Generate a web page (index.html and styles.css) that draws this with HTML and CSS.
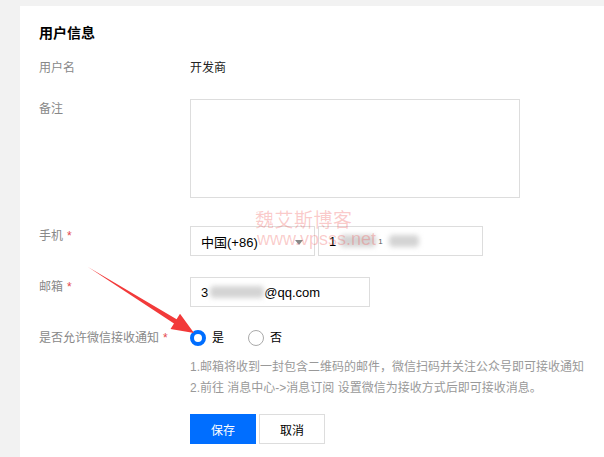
FILE: index.html
```html
<!DOCTYPE html>
<html lang="zh-CN">
<head>
<meta charset="utf-8">
<title>用户信息</title>
<link rel="stylesheet" href="styles.css">
</head>
<body>
<div class="page">
  <div class="card">
    <h2 class="title">用户信息</h2>

    <div class="row row-name">
      <div class="label">用户名</div>
      <div class="value">开发商</div>
    </div>

    <div class="row row-note">
      <div class="label">备注</div>
      <div class="textarea"></div>
    </div>

    <div class="row row-phone">
      <div class="label">手机<span class="req">*</span></div>
      <div class="controls">
        <div class="select">中国(+86)<span class="caret"></span></div>
        <div class="input input-phone">1<span class="blur blur-a"></span><span class="dot">1</span><span class="blur blur-b"></span></div>
      </div>
    </div>

    <div class="row row-mail">
      <div class="label">邮箱<span class="req">*</span></div>
      <div class="input input-mail">3<span class="blur blur-c"></span>@qq.com</div>
    </div>

    <div class="row row-radio">
      <div class="label">是否允许微信接收通知<span class="req">*</span></div>
      <div class="radios">
        <span class="radio"><span class="circle checked"></span>是</span>
        <span class="radio"><span class="circle"></span>否</span>
      </div>
    </div>

    <div class="hint">
      <p>1.邮箱将收到一封包含二维码的邮件，微信扫码并关注公众号即可接收通知</p>
      <p>2.前往 消息中心-&gt;消息订阅 设置微信为接收方式后即可接收消息。</p>
    </div>

    <div class="actions">
      <button class="btn btn-primary">保存</button>
      <button class="btn btn-default">取消</button>
    </div>
  </div>

  <div class="watermark">
    <div class="wm-cn">魏艾斯博客</div>
    <div class="wm-en">www.vpsss.net</div>
  </div>

  <svg class="arrow" width="604" height="457" viewBox="0 0 604 457">
    <polygon points="88,267 176.6,319.3 180,313.8 194,333 170.5,329 174,323.5" fill="#f23a3a"/>
  </svg>
</div>
</body>
</html>
```

FILE: styles.css
```css
* { box-sizing: border-box; }
html, body { margin: 0; padding: 0; }
body {
  background: #f2f2f2;
  font-family: "Liberation Sans", "Noto Sans CJK SC", sans-serif;
  font-size: 12px;
  color: #000;
  width: 604px;
  height: 457px;
  overflow: hidden;
}
.page {
  position: relative;
  width: 604px;
  height: 457px;
  padding: 6px 0 0 20px;
}
.card {
  background: #fff;
  height: 100%;
  padding: 17px 0 0 19px;
}
.title {
  margin: 0;
  font-size: 14px;
  font-weight: bold;
  line-height: 20px;
  color: #000;
}
.row {
  display: flex;
  align-items: flex-start;
}
.label {
  width: 151px;
  flex: none;
  line-height: 20px;
  color: #888;
}
.req {
  color: #e5484d;
  margin-left: 4px;
  font-size: 12px;
}
.value { line-height: 20px; color: #222; }
.row-name { margin-top: 15px; }
.row-note { margin-top: 21px; }
.textarea {
  width: 330px;
  height: 99px;
  border: 1px solid #ddd;
}
.row-phone { margin-top: 28px; }
.controls { display: flex; gap: 3px; }
.select, .input {
  height: 30px;
  border: 1px solid #ddd;
  display: flex;
  align-items: center;
  padding-left: 10px;
  font-size: 13px;
  color: #000;
}
.select {
  width: 125px;
  position: relative;
}
.caret {
  position: absolute;
  right: 11px;
  top: 13px;
  width: 0;
  height: 0;
  border-left: 4px solid transparent;
  border-right: 4px solid transparent;
  border-top: 5px solid #888;
}
.input-phone { width: 165px; }
.blur {
  display: inline-block;
  height: 12px;
  background: #d4d4d4;
  filter: blur(2.5px);
  border-radius: 4px;
}
.blur-a { width: 36px; margin-left: 4px; }
.dot { margin-left: 2px; font-size: 8px; color: #555; }
.blur-b { width: 30px; margin-left: 6px; }
.row-mail { margin-top: 21px; }
.input-mail { width: 180px; }
.blur-c { width: 54px; margin: 0 0 0 2px; }
.row-radio { margin-top: 21px; }
.radios {
  display: flex;
  line-height: 20px;
  height: 20px;
  align-items: center;
}
.radio {
  display: inline-flex;
  align-items: center;
  margin-right: 24px;
  color: #000;
}
.circle {
  width: 16px;
  height: 16px;
  border-radius: 50%;
  border: 1px solid #aaa;
  margin-right: 6px;
  background: #fff;
}
.circle.checked {
  border: 4px solid #006eff;
}
.hint {
  margin: 9px 0 0 151px;
  color: #999;
  line-height: 21px;
}
.hint p { margin: 0; }
.actions {
  margin: 15px 0 0 151px;
  display: flex;
  gap: 3px;
}
.btn {
  width: 66px;
  height: 30px;
  font-family: "Liberation Sans", "Noto Sans CJK SC", sans-serif;
  font-size: 12px;
  border-radius: 0;
  cursor: pointer;
  padding: 0;
}
.btn-primary {
  background: #006eff;
  color: #fff;
  border: 1px solid #006eff;
}
.btn-default {
  background: #fff;
  color: #000;
  border: 1px solid #ddd;
}
.watermark {
  position: absolute;
  left: 255px;
  top: 208px;
  color: rgba(238, 70, 70, 0.28);
  pointer-events: none;
}
.wm-cn {
  font-family: "Noto Sans CJK SC", sans-serif;
  font-size: 19px;
  line-height: 22px;
  letter-spacing: 0.5px;
}
.wm-en {
  font-family: "Liberation Sans", sans-serif;
  font-size: 18px;
  line-height: 18px;
  margin-left: 2px;
}
.arrow {
  position: absolute;
  left: 0;
  top: 0;
  pointer-events: none;
}
```
